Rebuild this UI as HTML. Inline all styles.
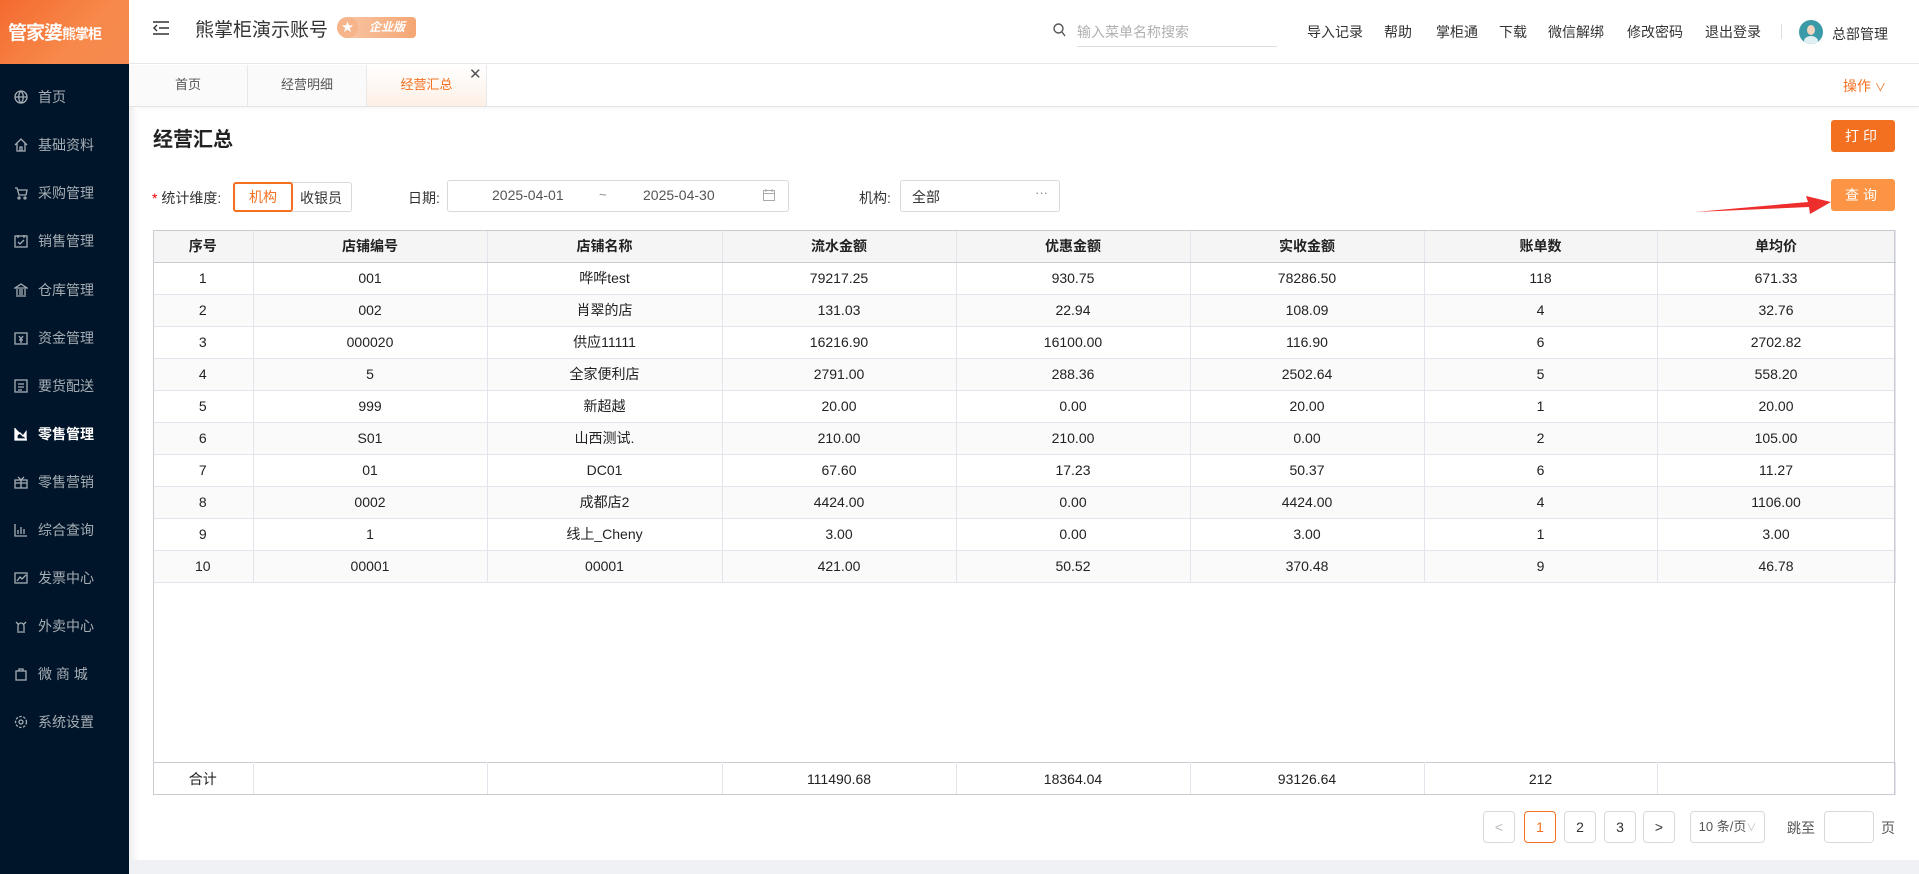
<!DOCTYPE html>
<html><head><meta charset="utf-8"><style>
*{box-sizing:border-box;margin:0;padding:0}
body{width:1919px;height:874px;overflow:hidden;font-family:"Liberation Sans","Noto Sans CJK SC",sans-serif;background:#fff;position:relative;color:#333}
.a{position:absolute}
#side{left:0;top:0;width:129px;height:874px;background:#001529}
#logo{left:0;top:0;width:129px;height:64px;background:linear-gradient(135deg,#f46a2f,#f7894a 60%,#f58a50);color:#fff;font-weight:bold;font-size:19px;line-height:64px;padding-left:8px;letter-spacing:-1px;font-family:"Noto Sans CJK SC",sans-serif;white-space:nowrap;overflow:hidden}
#logo small{font-size:14px}
.mi{left:0;width:129px;height:48px;color:#a6adb4;font-size:14px;display:flex;align-items:center;padding-left:14px}
.mi svg{width:14px;height:14px;margin-right:10px;stroke:#a6adb4;fill:none;stroke-width:1.3}
.mi.on{color:#fff;font-weight:bold}
.mi.on svg{stroke:#fff}
.hl{top:22px;font-size:14px;color:#333}
table{border-collapse:collapse;table-layout:fixed}
td,th{border-right:1px solid #e4e4ec;border-bottom:1px solid #e4e4ec;text-align:center;font-size:14px;height:32px;color:#222}
th{background:#f5f5f5;font-weight:bold;border-bottom:1px solid #c8cbd0}
tr:nth-child(odd) td{background:#fafafa}
.pg{top:811px;height:32px;width:32px;border:1px solid #d9d9d9;border-radius:4px;text-align:center;line-height:30px;font-size:14px;color:#333}
</style></head><body>
<div id="side" class="a"></div>
<div id="logo" class="a">管家婆<small>熊掌柜</small></div>
<div class="a mi" style="top:73px"><svg viewBox="0 0 14 14"><circle cx="7" cy="7" r="6"/><path d="M1 7h12M7 1c-3 3-3 9 0 12M7 1c3 3 3 9 0 12"/></svg>首页</div>
<div class="a mi" style="top:121px"><svg viewBox="0 0 14 14"><path d="M1 7l6-6 6 6M3 5v8h8V5M6 13V9h2v4"/></svg>基础资料</div>
<div class="a mi" style="top:169px"><svg viewBox="0 0 14 14"><path d="M1 2h2l2 7h7l1-5H4"/><circle cx="5" cy="12" r="1"/><circle cx="11" cy="12" r="1"/></svg>采购管理</div>
<div class="a mi" style="top:217px"><svg viewBox="0 0 14 14"><rect x="1" y="2" width="12" height="11"/><path d="M4 1v3M10 1v3M4 8l2 2 4-4"/></svg>销售管理</div>
<div class="a mi" style="top:266px"><svg viewBox="0 0 14 14"><path d="M1 5l6-4 6 4zM2 13h10M3 6v6M6 6v6M8 6v6M11 6v6"/></svg>仓库管理</div>
<div class="a mi" style="top:314px"><svg viewBox="0 0 14 14"><rect x="1" y="2" width="12" height="11"/><path d="M5 5l2 3 2-3M7 8v4M5 9h4"/></svg>资金管理</div>
<div class="a mi" style="top:362px"><svg viewBox="0 0 14 14"><rect x="1" y="1" width="12" height="12"/><path d="M4 5h6M4 8h6M4 11h4"/></svg>要货配送</div>
<div class="a mi on" style="top:410px"><svg viewBox="0 0 14 14"><path d="M1 1v12h12M3 12V8l3-2 3 3 3-4v7z" fill="#fff"/></svg>零售管理</div>
<div class="a mi" style="top:458px"><svg viewBox="0 0 14 14"><rect x="1" y="5" width="12" height="8"/><path d="M1 8h12M7 5v8M4 2l3 3 3-3"/></svg>零售营销</div>
<div class="a mi" style="top:506px"><svg viewBox="0 0 14 14"><path d="M1 1v12h12M4 11V7M7 11V4M10 11V6"/></svg>综合查询</div>
<div class="a mi" style="top:554px"><svg viewBox="0 0 14 14"><rect x="1" y="2" width="12" height="10"/><path d="M3 10l3-4 2 2 4-4"/></svg>发票中心</div>
<div class="a mi" style="top:602px"><svg viewBox="0 0 14 14"><path d="M3 13h8M4 12V7a3 3 0 016 0v5M2 3l2 2M12 3l-2 2"/></svg>外卖中心</div>
<div class="a mi" style="top:650px"><svg viewBox="0 0 14 14"><rect x="2" y="4" width="10" height="9"/><path d="M5 4V2h4v2"/></svg>微 商 城</div>
<div class="a mi" style="top:698px"><svg viewBox="0 0 14 14"><circle cx="7" cy="7" r="2"/><circle cx="7" cy="7" r="5.5" stroke-dasharray="2.5 1.5"/></svg>系统设置</div>

<div class="a" style="left:129px;top:0;width:1790px;height:64px;border-bottom:1px solid #e8e8e8"></div>
<svg class="a" style="left:153px;top:21px" width="16" height="14" viewBox="0 0 16 14" fill="none" stroke="#333" stroke-width="1.4"><path d="M0 1h16M6 7h10M0 13h16M4 4L1 7l3 3"/></svg>
<div class="a" style="left:195px;top:15px;font-size:19px;color:#333">熊掌柜演示账号</div>
<div class="a" style="left:337px;top:17px;width:79px;height:21px;border-radius:11px 4px 4px 11px;background:linear-gradient(90deg,#f8c8a8,#f5a673);color:#fff;font-weight:bold;font-style:italic;font-size:12px;line-height:21px;padding-left:32px">企业版<div class="a" style="left:0;top:0;width:21px;height:21px;border-radius:50%;background:#f6b48a;color:#fff;font-size:12px;text-align:center;line-height:21px;font-style:normal">★</div></div>
<svg class="a" style="left:1053px;top:23px" width="13" height="14" viewBox="0 0 13 14" fill="none" stroke="#555" stroke-width="1.4"><circle cx="5.5" cy="5.5" r="4.5"/><path d="M9 9l3 4"/></svg>
<div class="a" style="left:1077px;top:22px;font-size:14px;color:#b0b0b0">输入菜单名称搜索</div>
<div class="a" style="left:1077px;top:46px;width:200px;border-bottom:1px solid #ddd"></div>
<div class="a hl" style="left:1307px">导入记录</div>
<div class="a hl" style="left:1384px">帮助</div>
<div class="a hl" style="left:1436px">掌柜通</div>
<div class="a hl" style="left:1499px">下载</div>
<div class="a hl" style="left:1548px">微信解绑</div>
<div class="a hl" style="left:1627px">修改密码</div>
<div class="a hl" style="left:1705px">退出登录</div>
<div class="a" style="left:1781px;top:24px;height:15px;border-left:1px solid #ddd"></div>
<div class="a" style="left:1799px;top:20px;width:24px;height:24px;border-radius:50%;background:#3a9aa8;overflow:hidden"><div class="a" style="left:8px;top:5px;width:8px;height:10px;border-radius:50%;background:#f4d5bf"></div><div class="a" style="left:5px;top:16px;width:14px;height:10px;border-radius:50%;background:#dfeff2"></div></div>
<div class="a hl" style="left:1832px;top:24px">总部管理</div>

<div class="a" style="left:129px;top:64px;width:1790px;height:43px;border-bottom:1px solid #e4e4e4;box-shadow:0 2px 4px rgba(0,0,0,.04)"></div>
<div class="a" style="left:129px;top:65px;width:119px;height:41px;border-right:1px solid #e8e8e8;text-align:center;line-height:40px;font-size:13px;color:#555;background:#fafafa">首页</div>
<div class="a" style="left:248px;top:65px;width:119px;height:41px;border-right:1px solid #e8e8e8;text-align:center;line-height:40px;font-size:13px;color:#555;background:#fafafa">经营明细</div>
<div class="a" style="left:367px;top:65px;width:120px;height:41px;border-right:1px solid #e8e8e8;text-align:center;line-height:40px;font-size:13px;color:#f37021;background:linear-gradient(#fff,#fdf0e6)">经营汇总</div>
<div class="a" style="left:469px;top:65px;font-size:15px;color:#555">✕</div>
<div class="a" style="left:1843px;top:76px;font-size:14px;color:#f37021">操作 <span style="font-size:11px">∨</span></div>
<div class="a" style="left:129px;top:107px;width:10px;height:753px;background:linear-gradient(90deg,#eee,#fff)"></div>

<div class="a" style="left:153px;top:123px;font-size:20px;font-weight:bold;color:#222">经营汇总</div>
<div class="a" style="left:1831px;top:120px;width:64px;height:32px;background:#f37021;border-radius:3px;color:#fff;font-size:14px;text-align:center;line-height:32px;letter-spacing:4px">打印</div>

<div class="a" style="left:152px;top:188px;font-size:14px"><span style="color:#e00">*</span> 统计维度:</div>
<div class="a" style="left:233px;top:182px;width:119px;height:30px;border:1px solid #d9d9d9;border-radius:3px"></div>
<div class="a" style="left:233px;top:182px;width:60px;height:30px;border:2px solid #f37021;border-radius:3px;color:#f37021;font-size:14px;text-align:center;line-height:26px">机构</div>
<div class="a" style="left:300px;top:188px;font-size:14px;color:#333">收银员</div>
<div class="a" style="left:408px;top:188px;font-size:14px">日期:</div>
<div class="a" style="left:447px;top:180px;width:342px;height:32px;border:1px solid #d9d9d9;border-radius:3px"></div>
<div class="a" style="left:492px;top:187px;font-size:14px;color:#555">2025-04-01</div>
<div class="a" style="left:599px;top:187px;font-size:13px;color:#888">~</div>
<div class="a" style="left:643px;top:187px;font-size:14px;color:#555">2025-04-30</div>
<svg class="a" style="left:763px;top:189px" width="12" height="12" viewBox="0 0 12 12" fill="none" stroke="#aaa"><rect x=".5" y="1.5" width="11" height="10"/><path d="M0 4.5h12M3 0v3M9 0v3"/></svg>
<div class="a" style="left:859px;top:188px;font-size:14px">机构:</div>
<div class="a" style="left:900px;top:180px;width:160px;height:32px;border:1px solid #d9d9d9;border-radius:3px"></div>
<div class="a" style="left:912px;top:187px;font-size:14px;color:#333">全部</div>
<div class="a" style="left:1035px;top:185px;font-size:13px;color:#888">···</div>
<div class="a" style="left:1831px;top:179px;width:64px;height:32px;background:#fb9444;border-radius:3px;color:#fff;font-size:14px;text-align:center;line-height:32px;letter-spacing:4px">查询</div>
<svg class="a" style="left:1690px;top:190px" width="145" height="26" viewBox="0 0 145 26"><path d="M5 22L118 12 116 6 141 12 120 24 119 17z" fill="#ee2d2d"/></svg>

<table class="a" style="left:153px;top:230px;width:1742px">
<colgroup><col style="width:100px"><col style="width:234px"><col style="width:235px"><col style="width:234px"><col style="width:234px"><col style="width:234px"><col style="width:233px"><col style="width:238px"></colgroup>
<tr><th>序号</th><th>店铺编号</th><th>店铺名称</th><th>流水金额</th><th>优惠金额</th><th>实收金额</th><th>账单数</th><th>单均价</th></tr>
<tr><td>1</td><td>001</td><td>哗哗test</td><td>79217.25</td><td>930.75</td><td>78286.50</td><td>118</td><td>671.33</td></tr>
<tr><td>2</td><td>002</td><td>肖翠的店</td><td>131.03</td><td>22.94</td><td>108.09</td><td>4</td><td>32.76</td></tr>
<tr><td>3</td><td>000020</td><td>供应11111</td><td>16216.90</td><td>16100.00</td><td>116.90</td><td>6</td><td>2702.82</td></tr>
<tr><td>4</td><td>5</td><td>全家便利店</td><td>2791.00</td><td>288.36</td><td>2502.64</td><td>5</td><td>558.20</td></tr>
<tr><td>5</td><td>999</td><td>新超越</td><td>20.00</td><td>0.00</td><td>20.00</td><td>1</td><td>20.00</td></tr>
<tr><td>6</td><td>S01</td><td>山西测试.</td><td>210.00</td><td>210.00</td><td>0.00</td><td>2</td><td>105.00</td></tr>
<tr><td>7</td><td>01</td><td>DC01</td><td>67.60</td><td>17.23</td><td>50.37</td><td>6</td><td>11.27</td></tr>
<tr><td>8</td><td>0002</td><td>成都店2</td><td>4424.00</td><td>0.00</td><td>4424.00</td><td>4</td><td>1106.00</td></tr>
<tr><td>9</td><td>1</td><td>线上_Cheny</td><td>3.00</td><td>0.00</td><td>3.00</td><td>1</td><td>3.00</td></tr>
<tr><td>10</td><td>00001</td><td>00001</td><td>421.00</td><td>50.52</td><td>370.48</td><td>9</td><td>46.78</td></tr>
</table>
<table class="a" style="left:153px;top:762px;width:1742px;border-top:1px solid #c8cbd0">
<colgroup><col style="width:100px"><col style="width:234px"><col style="width:235px"><col style="width:234px"><col style="width:234px"><col style="width:234px"><col style="width:233px"><col style="width:238px"></colgroup>
<tr><td style="background:#fff">合计</td><td style="background:#fff"></td><td style="background:#fff"></td><td style="background:#fff">111490.68</td><td style="background:#fff">18364.04</td><td style="background:#fff">93126.64</td><td style="background:#fff">212</td><td style="background:#fff"></td></tr>
</table>
<div class="a" style="left:153px;top:230px;width:1742px;height:565px;border:1px solid #c8cbd0;z-index:5"></div>

<div class="a pg" style="left:1483px;color:#bbb">&lt;</div>
<div class="a pg" style="left:1524px;border-color:#f37021;color:#f37021">1</div>
<div class="a pg" style="left:1564px">2</div>
<div class="a pg" style="left:1604px">3</div>
<div class="a pg" style="left:1643px">&gt;</div>
<div class="a pg" style="left:1690px;width:75px;font-size:13px;color:#555">10 条/页<span style="color:#bbb;font-size:10px">∨</span></div>
<div class="a" style="left:1787px;top:818px;font-size:14px;color:#555">跳至</div>
<div class="a pg" style="left:1824px;width:50px"></div>
<div class="a" style="left:1881px;top:818px;font-size:14px;color:#555">页</div>
<div class="a" style="left:129px;top:860px;width:1790px;height:14px;background:#f0f1f4"></div>
</body></html>
